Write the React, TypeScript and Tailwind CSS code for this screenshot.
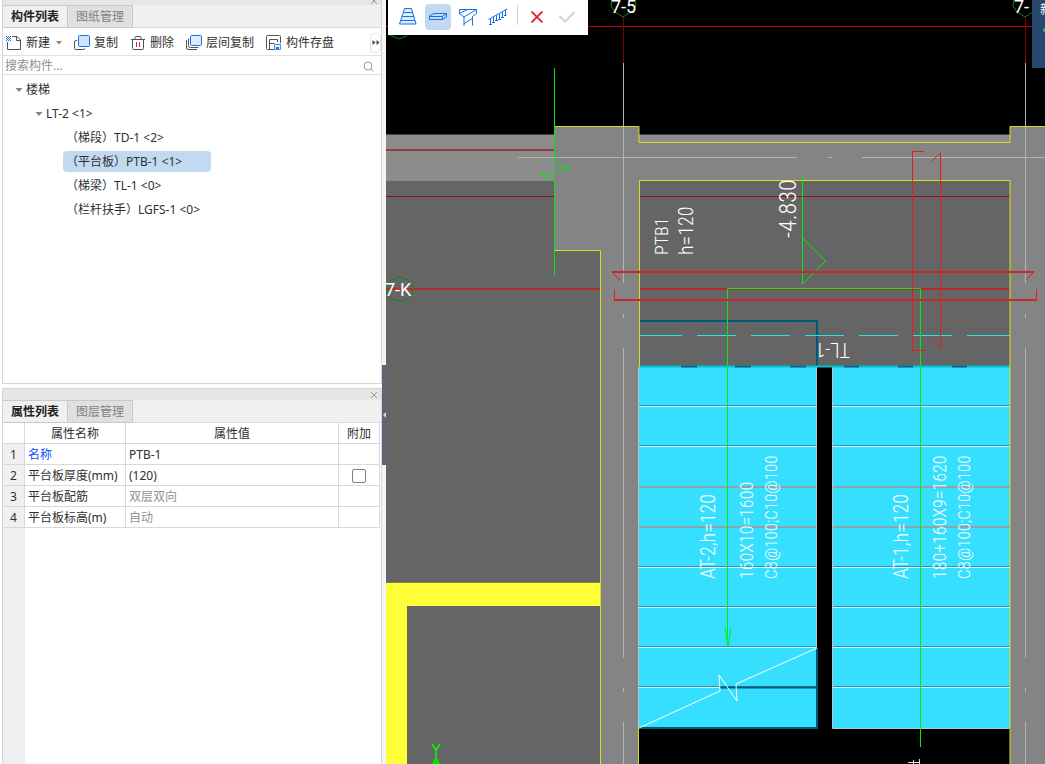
import type { ReactNode } from "react";

const cadFont = "'Roboto Condensed', Roboto, sans-serif";

const treeItems = [
  { label: "（梯段）TD-1 <2>" },
  { label: "（平台板）PTB-1 <1>", selected: true },
  { label: "（梯梁）TL-1 <0>" },
  { label: "（栏杆扶手）LGFS-1 <0>" },
];

interface Property {
  name: string;
  value: string;
  link?: boolean;
  muted?: boolean;
  check?: boolean;
}

const properties: Property[] = [
  { name: "名称", value: "PTB-1", link: true },
  { name: "平台板厚度(mm)", value: "(120)", check: true },
  { name: "平台板配筋", value: "双层双向", muted: true },
  { name: "平台板标高(m)", value: "自动", muted: true },
];

const NewIcon = () => (
  <svg className="size-4" viewBox="0 0 16 16" fill="none">
    <path d="M6 1.500h5l3.500 3.500v9.500h-13V7M10.500 1.500v4h4" stroke="#4b5260" />
    <path d="M0 1h1v1H0zM2 1h1v1H2zM4 1h1v1H4zM1 2h1v1H1zM3 2h1v1H3zM0 3h1v1H0zM2 3h1v1H2zM4 3h1v1H4zM1 4h1v1H1zM3 4h1v1H3zM0 5h1v1H0zM2 5h1v1H2zM4 5h1v1H4z" fill="#1673e6" />
  </svg>
);

const CopyIcon = () => (
  <svg className="size-4" viewBox="0 0 16 16" fill="none">
    <path d="M3 5.500H2Q.5 5.500.5 7v6.500q0 1 1 1h8q1 0 1-1V13" stroke="#4b5260" />
    <rect x="4.500" y=".5" width="11" height="11" rx="1" fill="#cfe3fb" stroke="#1673e6" />
  </svg>
);

const TrashIcon = () => (
  <svg className="size-4" viewBox="0 0 16 16" fill="none">
    <path d="M1 4.500h14M5 4V2.500q0-1 1-1h4q1 0 1 1V4M2.500 5v8.500q0 1 1 1h9q1 0 1-1V5" stroke="#4b5260" />
    <path d="M6.500 7v5M9.500 7v5" stroke="#d9232e" />
  </svg>
);

const LayerCopyIcon = () => (
  <svg className="size-4" viewBox="0 0 16 16" fill="none">
    <path d="M.5 5v8q0 1.500 1.500 1.500h9" stroke="#4b5260" />
    <path d="M2.500 3.500v7q0 2 2 2h8" stroke="#4b5260" />
    <rect x="4.500" y=".5" width="11" height="10" rx="1" fill="#dcebfd" stroke="#1673e6" />
  </svg>
);

const SaveIcon = () => (
  <svg className="size-4" viewBox="0 0 16 16" fill="none">
    <path d="M8 14.500H1.500q-1 0-1-1v-12q0-1 1-1h12q1 0 1 1V8M3.500 14V4.500h8V7M3.500 8.500h5" stroke="#4b5260" />
    <path d="M8.500 9.500h6v5h-6z" fill="#e8f1fd" stroke="#4a90e8" />
    <path d="M10 12h3v2h-3z" fill="#1673e6" />
  </svg>
);

const CloseIcon = () => (
  <svg className="h-2 w-2" viewBox="0 0 8 8">
    <path d="M1 1l6 6M7 1L1 7" stroke="#999" fill="none" />
  </svg>
);

const Caret = () => (
  <svg className="h-1 w-2 shrink-0" viewBox="0 0 8 4">
    <path d="M.5 0h7L4 4z" fill="#858585" />
  </svg>
);

const ToolButton = ({ icon, label, menu }: { icon: ReactNode; label: string; menu?: boolean }) => (
  <button className="flex items-center gap-1 whitespace-nowrap">
    {icon}
    {label}
    {menu && (
      <svg className="h-1 w-2" viewBox="0 0 8 4">
        <path d="M2 0h6L5 3.500z" fill="#888" />
      </svg>
    )}
  </button>
);

const Tabs = ({ items }: { items: string[] }) => (
  <div role="tablist" className="flex h-[23px] shrink-0 border-b border-[#dcdcdc] bg-[#f0f0f0]">
    {items.map((item, i) => (
      <button
        key={item}
        role="tab"
        aria-selected={i === 0}
        className={`-mb-px w-[65px] border border-l-0 border-[#c5c9d2] whitespace-nowrap ${
          i === 0 ? "bg-[#f0f0f0] font-bold text-[#222]" : "bg-[#e0e0e0] text-[#808080]"
        }`}
      >
        {item}
      </button>
    ))}
  </div>
);

const TreePanel = () => (
  <section className="flex shrink grow basis-96 flex-col border-x border-b border-[#d4d4d4]">
    <div className="flex h-[5px] shrink-0 items-end justify-end overflow-hidden bg-[#e6e6e6] pr-[3px]">
      <CloseIcon />
    </div>
    <Tabs items={["构件列表", "图纸管理"]} />
    <div className="flex h-7 shrink-0 items-center gap-3 border-b border-[#e0e0e0] pt-0.5 pl-[3px]">
      <ToolButton icon={<NewIcon />} label="新建" menu />
      <ToolButton icon={<CopyIcon />} label="复制" />
      <ToolButton icon={<TrashIcon />} label="删除" />
      <ToolButton icon={<LayerCopyIcon />} label="层间复制" />
      <ToolButton icon={<SaveIcon />} label="构件存盘" />
      <button aria-label="更多" className="ml-auto flex h-5 w-[11px] items-center justify-center rounded-sm border border-[#e4e4e4]">
        <svg className="h-2 w-2 shrink-0" viewBox="0 0 8 8">
          <path d="M.5 1L3.500 3.500.5 6zM4.500 1l3 2.500-3 2.500z" fill="#444" />
        </svg>
      </button>
    </div>
    <div className="flex h-[19px] shrink-0 items-center border-b border-[#e0e0e0] pt-0.5 pr-[7px] pl-[2px]">
      <input type="text" aria-label="搜索构件" placeholder="搜索构件..." className="min-w-0 flex-1 outline-none placeholder:text-[#909090]" />
      <svg className="size-[11px]" viewBox="0 0 11 11" fill="none">
        <circle cx="5" cy="5" r="4" stroke="#999" />
        <path d="M8 8l2.500 2.500" stroke="#999" />
      </svg>
    </div>
    <ul className="min-h-0 flex-1 overflow-hidden pt-[3px] leading-6">
      <li>
        <div className="flex items-center gap-[3px] pl-3">
          <Caret />
          楼梯
        </div>
        <ul>
          <li>
            <div className="flex items-center gap-[3px] pl-8">
              <Caret />
              {"LT-2 <1>"}
            </div>
            <ul className="pl-[60px]">
              {treeItems.map((item) => (
                <li key={item.label} className="flex h-6 items-start pt-px">
                  <span className={`h-[21px] min-w-[148px] rounded-sm pl-[3px] leading-[21px] ${item.selected ? "bg-[#c1d9f1]" : ""}`}>
                    {item.label}
                  </span>
                </li>
              ))}
            </ul>
          </li>
        </ul>
      </li>
    </ul>
  </section>
);

const PropertyPanel = () => (
  <section className="flex shrink grow basis-[376px] flex-col border-x border-t border-[#d4d4d4]">
    <div className="flex h-[11px] shrink-0 items-center justify-end bg-[#e6e6e6] pr-[3px]">
      <button aria-label="关闭">
        <CloseIcon />
      </button>
    </div>
    <Tabs items={["属性列表", "图层管理"]} />
    <div className="flex min-h-0 flex-1 flex-col">
      <table className="w-full table-fixed border-separate border-spacing-0 pr-px text-left">
        <colgroup>
          <col className="w-[22px]" />
          <col className="w-[101px]" />
          <col />
          <col className="w-[41px]" />
        </colgroup>
        <thead>
          <tr className="h-[21px] [&>th]:border-r [&>th]:border-b [&>th]:border-[#d9d9d9] [&>th]:px-0 [&>th]:pt-[2px] [&>th]:pb-0 [&>th]:text-center [&>th]:font-normal">
            <th aria-label="序号" />
            <th>属性名称</th>
            <th>属性值</th>
            <th>附加</th>
          </tr>
        </thead>
        <tbody>
          {properties.map((p, i) => (
            <tr key={p.name} className="h-[21px] [&>td]:border-r [&>td]:border-b [&>td]:border-[#d9d9d9] [&>td]:px-0 [&>td]:pt-[2px] [&>td]:pb-0">
              <td className="bg-[#f0f0f0] text-center">{i + 1}</td>
              <td>
                <span className={`pl-[3px] whitespace-nowrap ${p.link ? "text-[#0a50ff]" : ""}`}>{p.name}</span>
              </td>
              <td>
                <span className={`pl-[3px] ${p.muted ? "text-[#909090]" : ""}`}>{p.value}</span>
              </td>
              <td>
                {p.check && (
                  <input
                    type="checkbox"
                    aria-label={p.name}
                    className="mx-auto block size-[14px] appearance-none rounded-xs border border-[#808080] bg-white"
                  />
                )}
              </td>
            </tr>
          ))}
        </tbody>
      </table>
      <div className="w-[22px] flex-1 bg-[#f0f0f0]" />
    </div>
  </section>
);

const DrawToolbar = () => (
  <div className="absolute top-0 left-[2px] flex h-[35px] w-[200px] items-start gap-1 bg-white pt-1 pl-[7px]">
    <button aria-label="梯段" className="flex size-[26px] items-center justify-center">
      <svg className="h-5 w-5" viewBox="0 0 20 20" fill="none" stroke="#1673e6">
        <path d="M6.500 1.500h7l4.500 15.500H1.500z" fill="#dcebfd" />
        <path d="M5.500 5.500h9M4 9.500h12M3 13.500h14" />
      </svg>
    </button>
    <button aria-label="平台板" aria-pressed="true" className="flex size-[26px] items-center justify-center rounded bg-[#c1d9f1]">
      <svg className="h-5 w-5" viewBox="0 0 20 20" fill="none" stroke="#1673e6">
        <path d="M1.500 9L6 6.500h12.500v3.500l-4 2.500h-13zM1.500 9.500h13l4-3M14.500 9.500v3" />
      </svg>
    </button>
    <button aria-label="梯梁" className="flex size-[26px] items-center justify-center">
      <svg className="h-5 w-5" viewBox="0 0 20 20" fill="none" stroke="#1673e6">
        <path d="M1.500 2.500h17v4l-4 3v9M1.500 2.500v4L6 10v9M6 10l12.500-7.500M1.500 6.500l8-4M6 16.500l8.500-5" />
      </svg>
    </button>
    <button aria-label="栏杆扶手" className="flex size-[26px] items-center justify-center">
      <svg className="h-5 w-5" viewBox="0 0 20 20" fill="none" stroke="#1673e6">
        <path d="M.5 12.500L19 2M2.500 11.500v6M5.500 9.500v6M8.500 8v6M11.500 6.500v6M14.500 4.500v6M17.500 3v5M1 17.500h3M4 15.500h3M7 13.500h3M10 12.500h3M13 10.500h3M16 8.500h2.500" />
      </svg>
    </button>
    <span className="mx-0.5 mt-px h-5 w-px bg-[#d0d0d0]" />
    <button aria-label="取消" className="flex size-[26px] items-center justify-center">
      <svg className="size-3" viewBox="0 0 12 12">
        <path d="M.5.5l11 11M11.500.5l-11 11" stroke="#dc232b" strokeWidth="1.800" />
      </svg>
    </button>
    <button aria-label="确定" className="flex size-[26px] items-center justify-center">
      <svg className="h-3 w-4" viewBox="0 0 16 12">
        <path d="M.5 5l5.500 5.500L15.500 1" stroke="#d4d4d4" strokeWidth="2" fill="none" />
      </svg>
    </button>
  </div>
);

const notes = [
  { x: 668, y: 255, size: 18, text: "PTB1" },
  { x: 693, y: 255, size: 20, text: "h=120" },
  { x: 796, y: 238, size: 24, text: "-4.830" },
  { x: 715, y: 579, size: 20, text: "AT-2,h=120" },
  { x: 753, y: 579, size: 18, text: "160X10=1600" },
  { x: 777, y: 579, size: 17, text: "C8@100;C10@100" },
  { x: 908, y: 579, size: 20, text: "AT-1,h=120" },
  { x: 946, y: 579, size: 18, text: "180+160X9=1620" },
  { x: 970, y: 579, size: 17, text: "C8@100;C10@100" },
];

const stepLines = [406, 446, 487, 527, 567, 607, 647, 687];

// Stair plan, drawn in window coordinates
const Drawing = () => (
  <svg className="block h-full w-full" viewBox="386 0 659 764" preserveAspectRatio="xMinYMin slice" fill="none">
    <path d="M386 0h659v764H386z" fill="#000" />
    <path d="M386 134h659v47H386z" fill="#8c8c8c" />
    <path d="M386 134.500h169M639 134.500h371" stroke="#444" />
    <path d="M386 181h253v583H386z" fill="#656565" />
    <path d="M639 181h371v186H639z" fill="#656565" />
    <path d="M555 127h84v15h371v-15h35v637h-35V181H639v583h-38V250h-46z" fill="#848484" />
    <path d="M386 583h214v23H407v158h-21z" fill="#ffff37" />
    <path d="M386 582.500h214" stroke="#83833f" />

    <path d="M386 26.500h646" stroke="#c80000" />
    <path d="M623.500 17v46M1025.500 17v46" stroke="#820000" />
    <path d="M386 150h169" stroke="#8c3c3c" strokeWidth="2" />
    <path d="M386 196.500h169M639 196.500h371" stroke="#8c1414" />
    <path d="M386 289h214M639 289h371" stroke="#b42d2d" strokeWidth="2" />

    <path d="M639 367h178v361H639zM832 367h178v361H832z" fill="#37dfff" />
    {stepLines.map((y) => (
      <g key={y}>
        <path d={`M639 ${y - 1}.5h178M832 ${y - 1}.5h178`} stroke={y === 487 || y === 527 ? "#8ca5aa" : "#2697b4"} />
        <path d={`M639 ${y}.5h178M832 ${y}.5h178`} stroke={y === 487 || y === 527 ? "#8ca5aa" : "#d8f5fb"} />
      </g>
    ))}
    <path d="M638.500 367v361M816.500 367v281M832.500 367v361.500h177" stroke="#b4c8cd" />
    <path d="M639 321h178v46M817 648v80H639M720 687.500h97" stroke="#005a78" strokeWidth="2" />
    <path d="M639 366.500h371" stroke="#00c0d6" strokeWidth="2" />
    <path d="M681 366.500h16M735 366.500h16M790 366.500h16M844 366.500h15M898 366.500h15M952 366.500h15" stroke="#146478" strokeWidth="2" />
    <path d="M639 335.500h43M697 335.500h39M751 335.500h39M805 335.500h39M859 335.500h39M913 335.500h39M967 335.500h43" stroke="#1ce8ee" />

    <path d="M518 157.500h279M828 157.500h4M862 157.500h183M623.500 63v220M623.500 314v4M623.500 348v310M623.500 688v4M623.500 722v42M1025.500 63v220M1025.500 314v4M1025.500 348v310M1025.500 688v4M1025.500 722v42" stroke="#b4b4b4" />
    <path d="M555 126.500h84v16h371v-16h35M639.500 367V180.500h370.500v583.500M638.500 728v36M555 250.500h45.500V764" stroke="#e1dc19" />

    <path d="M554.500 68v95l16.500 6-31 6 14.500 5.500v95" stroke="#00eb14" />
    <path d="M802.500 177v107l23-23-23-23M727.500 640V288.500h193V747M725 627l3 19 3-19" stroke="#00ee14" />

    <path d="M612 272h422M614 300h423" stroke="#c82828" strokeWidth="2" />
    <path d="M620 280l-8-8M1034 272l-8 8M614.500 289v11M1036.500 289v11" stroke="#f01919" />
    <path d="M924 151.500h-11.500v199H924M932 161l8.500-8v195l-8.500-8" stroke="#f01919" />
    <path d="M639 728l81-37-1-16 18 26-1-17 81-36" stroke="#fff" />

    <g stroke="#008c0c">
      <path d="M612 0l-1 6 4 6 8 5 8-5 5-6-1-6M1014 0l-1 6 4 6 8 5 8-5M388 34l4 2 7 3 8-3" />
      <path d="M399 277l9 3 5 7-1 7-5 5-8 2-8-2-5-6 1-8 4-5z" />
    </g>
    <g fill="#fff" fontFamily={cadFont} fontWeight="300">
      <g fontFamily="Roboto, sans-serif" fontSize="18" fontWeight="400">
        <text x="611" y="13">7-5</text>
        <text x="1014" y="13">7-</text>
        <text x="385" y="296">7-K</text>
      </g>
      {notes.map((n) => (
        <text key={`${n.x}`} fontSize={n.size} transform={`translate(${n.x} ${n.y}) rotate(-90)`}>
          {n.text}
        </text>
      ))}
      <text fontSize="20" transform="translate(850 343) rotate(180)">TL-1</text>
    </g>
    <path d="M908 762.500h12M913.500 760v4M919.500 759v5" stroke="#ddd" />
    <path d="M432 744l4 6v7M440 744l-4 6" stroke="#00fa00" strokeWidth="1.500" />
    <path d="M436 756l4 8h-8z" fill="#00e600" />
  </svg>
);

const App = () => (
  <div className="flex h-screen min-h-0 w-full overflow-hidden bg-white font-['Noto_Sans','Noto_Sans_CJK_SC',sans-serif] text-xs text-[#303030]">
    <aside className="flex w-[382px] shrink-0 flex-col gap-1 pl-[2px]">
      <TreePanel />
      <PropertyPanel />
    </aside>
    <div className="flex w-1 shrink-0 flex-col bg-[#f5f5f5] pt-[365px]">
      <button aria-label="收起" className="flex h-[100px] w-full items-center justify-end bg-[#5a6675]">
        <svg className="h-2 w-[3px]" viewBox="0 0 3 8">
          <path d="M3 1v6L0 4z" fill="#d0d4da" />
        </svg>
      </button>
    </div>
    <main className="relative min-w-0 flex-1 overflow-hidden bg-black">
      <Drawing />
      <DrawToolbar />
      <div className="absolute top-0 right-0 h-[68px] w-[13px] overflow-hidden bg-[#28486f] pt-[2px] pl-2 text-white">
        新
        <span className="mt-[10px] ml-[3px] block size-1 rounded-full bg-[#22c552]" />
      </div>
    </main>
  </div>
);

export default App;
